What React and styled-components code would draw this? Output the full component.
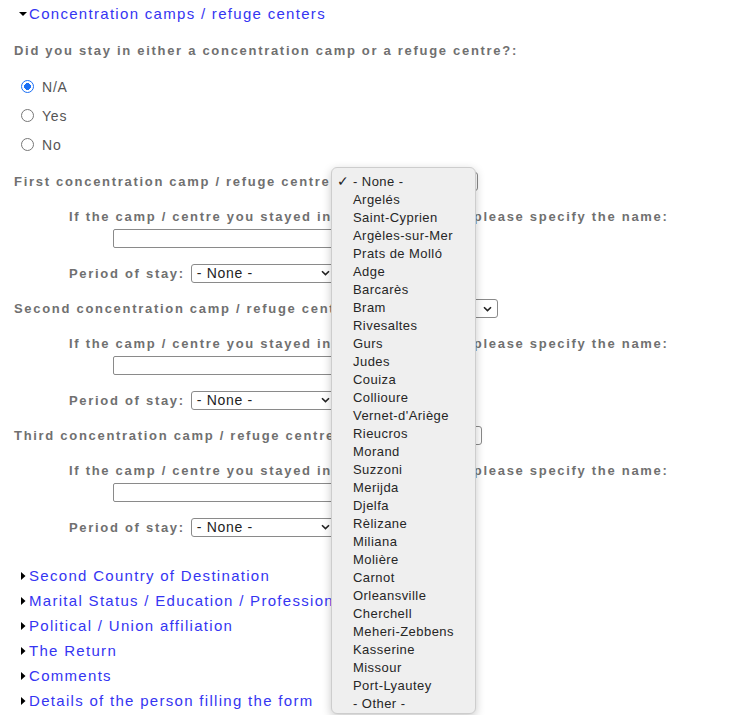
import React from "react";
import styled, { createGlobalStyle } from "styled-components";

const GlobalStyle = createGlobalStyle`
  html, body {
    margin: 0;
    padding: 0;
    background: #ffffff;
  }
  body {
    font-family: "Liberation Sans", Arial, sans-serif;
  }
`;

const camps = [
  "Argelés",
  "Saint-Cyprien",
  "Argèles-sur-Mer",
  "Prats de Molló",
  "Adge",
  "Barcarès",
  "Bram",
  "Rivesaltes",
  "Gurs",
  "Judes",
  "Couiza",
  "Collioure",
  "Vernet-d'Ariège",
  "Rieucros",
  "Morand",
  "Suzzoni",
  "Merijda",
  "Djelfa",
  "Rèlizane",
  "Miliana",
  "Molière",
  "Carnot",
  "Orleansville",
  "Cherchell",
  "Meheri-Zebbens",
  "Kasserine",
  "Missour",
  "Port-Lyautey",
];

const closedSections = [
  "Second Country of Destination",
  "Marital Status / Education / Profession",
  "Political / Union affiliation",
  "The Return",
  "Comments",
  "Details of the person filling the form",
];

const campBlocks = ["First", "Second", "Third"];

function Chevron() {
  return (
    <svg width="9" height="6" viewBox="0 0 9 6">
      <path d="M1 1.2 L4.5 4.6 L8 1.2" fill="none" stroke="#222" strokeWidth="1.6" />
    </svg>
  );
}

function Triangle({ open }) {
  return (
    <svg width="8" height="8" viewBox="0 0 8 8">
      {open ? <path d="M0 2 L8 2 L4 6 Z" fill="#000" /> : <path d="M2 0 L6.5 4 L2 8 Z" fill="#000" />}
    </svg>
  );
}

export default function App() {
  return (
    <Page>
      <GlobalStyle />
      <Summary>
        <Triangle open />
        <span>Concentration camps / refuge centers</span>
      </Summary>

      <Question>Did you stay in either a concentration camp or a refuge centre?:</Question>

      <RadioGroup>
        {["N/A", "Yes", "No"].map((opt, i) => (
          <RadioRow key={opt}>
            <Radio $checked={i === 0} />
            <span>{opt}</span>
          </RadioRow>
        ))}
      </RadioGroup>

      {campBlocks.map((n) => (
        <CampBlock key={n}>
          <Label>
            {n} concentration camp / refuge centre{" "}
            <FakeSelect $width={142}>
              <span>- None -</span>
              <Chevron />
            </FakeSelect>
          </Label>
          <SubBlock>
            <Label>If the camp / centre you stayed in is not in the list, please specify the name:</Label>
            <TextInput type="text" />
            <PeriodRow>
              <Label>Period of stay:</Label>
              <FakeSelect $width={145}>
                <span>- None -</span>
                <Chevron />
              </FakeSelect>
            </PeriodRow>
          </SubBlock>
        </CampBlock>
      ))}

      <Links>
        {closedSections.map((s) => (
          <Summary key={s} $row>
            <Triangle />
            <span>{s}</span>
          </Summary>
        ))}
      </Links>

      <Popup>
        <Option>
          <Check>✓</Check>- None -
        </Option>
        {camps.map((c) => (
          <Option key={c}>
            <Check />
            {c}
          </Option>
        ))}
        <Option>
          <Check />- Other -
        </Option>
      </Popup>
    </Page>
  );
}

const Page = styled.div`
  position: relative;
  height: 715px;
  overflow: hidden;
  padding: 3px 0 0 14px;
  box-sizing: border-box;
`;

const Summary = styled.div`
  display: flex;
  align-items: center;
  gap: 2px;
  height: ${(p) => (p.$row ? "25px" : "20px")};
  margin-left: 5px;
  color: #3535f2;
  font-size: 15px;
  letter-spacing: 1.3px;
  white-space: nowrap;
  svg {
    flex-shrink: 0;
    margin-top: 1px;
  }
`;

const Label = styled.div`
  display: block;
  line-height: 20px;
  height: 20px;
  color: #707070;
  font-size: 13px;
  font-weight: bold;
  letter-spacing: 1.7px;
  white-space: nowrap;
`;

const Question = styled(Label)`
  margin-top: 18px;
`;

const RadioGroup = styled.div`
  margin-top: 11px;
`;

const RadioRow = styled.div`
  display: flex;
  align-items: center;
  gap: 8px;
  height: 29px;
  margin-left: 7px;
  color: #555;
  font-size: 14px;
  letter-spacing: 0.8px;
`;

const Radio = styled.span`
  width: 13px;
  height: 13px;
  box-sizing: border-box;
  border-radius: 50%;
  border: ${(p) => (p.$checked ? "1.5px solid #1a6ff5" : "1px solid #777")};
  background: ${(p) => (p.$checked ? "radial-gradient(circle, #1a6ff5 0 3.2px, #fff 3.6px)" : "#fff")};
`;

const CampBlock = styled.div`
  margin-top: 13px;
  & + & {
    margin-top: 15px;
  }
`;

const SubBlock = styled.div`
  margin-top: 15px;
  padding-left: 55px;
`;

const TextInput = styled.input`
  display: block;
  box-sizing: border-box;
  margin: 2px 0 0 44px;
  width: 260px;
  height: 19px;
  border: 1px solid #8a8a8a;
  border-radius: 2px;
  padding: 0 4px;
  font-family: inherit;
`;

const PeriodRow = styled.div`
  display: flex;
  align-items: center;
  gap: 6px;
  margin-top: 16px;
`;

const FakeSelect = styled.span`
  display: inline-flex;
  align-items: center;
  justify-content: space-between;
  vertical-align: middle;
  box-sizing: border-box;
  width: ${(p) => p.$width}px;
  height: 19px;
  margin-top: -2px;
  padding: 0 5px 0 5px;
  background: #fff;
  border: 1px solid #8a8a8a;
  border-radius: 3px;
  color: #222;
  font-size: 14px;
  font-weight: normal;
  letter-spacing: 0.7px;
`;

const Links = styled.div`
  margin-top: 25px;
`;

const Popup = styled.div`
  position: absolute;
  left: 331px;
  top: 167px;
  width: 145px;
  height: 547px;
  box-sizing: border-box;
  padding-top: 4px;
  background: #efefef;
  border: 1px solid #cdcdcd;
  border-radius: 6px;
  box-shadow: 0 3px 10px rgba(0, 0, 0, 0.22);
  font-family: "Liberation Sans", Arial, sans-serif;
  font-size: 13px;
  letter-spacing: 0.45px;
  color: #262626;
`;

const Option = styled.div`
  display: flex;
  align-items: center;
  height: 18px;
  white-space: nowrap;
`;

const Check = styled.span`
  display: inline-block;
  width: 21px;
  padding-left: 5px;
  box-sizing: border-box;
  font-size: 14px;
  color: #222;
`;
